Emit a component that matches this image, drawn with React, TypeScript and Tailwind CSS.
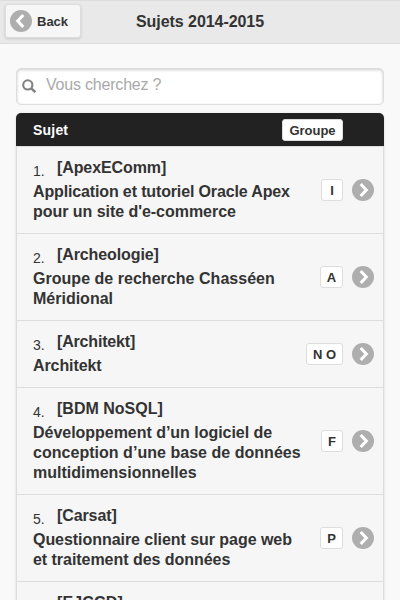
type Line = { text: string; tracking?: string };
type Row = { tag: Line; lines: Line[]; group: string; badge: string };

const rows: Row[] = [
  {
    tag: { text: "[ApexEComm]", tracking: "tracking-[-0.1px]" },
    lines: [
      { text: "Application et tutoriel Oracle Apex", tracking: "tracking-[-0.14px]" },
      { text: "pour un site d'e-commerce", tracking: "tracking-[-0.04px]" },
    ],
    group: "I",
    badge: "w-[22px]",
  },
  {
    tag: { text: "[Archeologie]", tracking: "tracking-[-0.1px]" },
    lines: [{ text: "Groupe de recherche Chasséen", tracking: "tracking-[0.03px]" }, { text: "Méridional" }],
    group: "A",
    badge: "w-[23px]",
  },
  {
    tag: { text: "[Architekt]", tracking: "tracking-[-0.18px]" },
    lines: [{ text: "Architekt", tracking: "tracking-[-0.1px]" }],
    group: "N O",
    badge: "w-[37px]",
  },
  {
    tag: { text: "[BDM NoSQL]" },
    lines: [
      { text: "Développement d’un logiciel de", tracking: "tracking-[-0.03px]" },
      { text: "conception d’une base de données", tracking: "tracking-[0.03px]" },
      { text: "multidimensionnelles" },
    ],
    group: "F",
    badge: "w-[22px]",
  },
  {
    tag: { text: "[Carsat]", tracking: "tracking-[-0.1px]" },
    lines: [
      { text: "Questionnaire client sur page web", tracking: "tracking-[-0.05px]" },
      { text: "et traitement des données", tracking: "tracking-[-0.04px]" },
    ],
    group: "P",
    badge: "w-[23px]",
  },
];

function Disc({ left = false }: { left?: boolean }) {
  return (
    <svg viewBox="0 0 22 22" className={left ? "size-[22px] shrink-0 -scale-x-100" : "size-[22px] shrink-0"}>
      <circle cx="11" cy="11" r="11" fill="#aeaeae" />
      <path d="M8.7 5 L14.3 11 L8.7 17" fill="none" stroke="#fff" strokeWidth="3.1" />
    </svg>
  );
}

export default function App() {
  return (
    <div className="h-[600px] w-[400px] overflow-hidden bg-[#f9f9f9] font-['Liberation_Sans',Arial,sans-serif] text-base text-[#333]">
      <header className="flex h-11 items-start border-y border-[#ddd] bg-[#e9e9e9] pl-[5px] pt-[3px]">
        <button className="flex h-[34px] w-[76px] items-center gap-[5px] rounded-[3px] border border-[#ddd] bg-[#f6f6f6] pl-1 text-[13px] font-bold shadow-[0_1px_3px_rgba(0,0,0,0.15)]">
          <Disc left />
          <span className="mt-px">Back</span>
        </button>
        <h1 className="ml-[55px] mt-2 whitespace-nowrap text-base font-bold leading-5 tracking-[-0.06px]">Sujets 2014-2015</h1>
      </header>

      <div className="mx-4 mt-6 flex h-[37px] items-center rounded-[5px] border border-[#ddd] bg-white pl-[5px] shadow-[inset_0_1px_3px_rgba(0,0,0,0.2)]">
        <svg viewBox="0 0 14 14" className="-mt-[2px] size-[14px]" fill="none" stroke="#808080">
          <circle cx="5.8" cy="5.9" r="4.6" strokeWidth="2.1" />
          <path d="M9.1 9.2 L13.2 13.2" strokeWidth="2.4" />
        </svg>
        <span className="-mt-[3px] ml-[10px] leading-5 tracking-[-0.2px] text-[#a9a9a9]">Vous cherchez ?</span>
      </div>

      <div className="mx-4 mt-2 overflow-hidden rounded-t-[5px] shadow-[0_1px_3px_rgba(0,0,0,0.15)]">
        <div className="flex h-[33px] items-center justify-between bg-[#222] pl-[17px] pr-[41px] text-[14px] font-bold text-white">
          <span className="mt-0.5 tracking-[0.2px]">Sujet</span>
          <span className="mt-px flex h-[22px] w-[61px] items-center justify-center rounded-[3px] border border-[#ddd] bg-white pt-px text-[13px] text-[#333]">Groupe</span>
        </div>
        <ol className="border-x border-[#ddd] bg-[#f6f6f6]">
          {rows.map((row, i) => (
            <li key={row.tag.text} className="flex items-center justify-between border-t border-[#ddd] pb-[11px] pl-4 pr-[9px] pt-[11px]">
              <div className="whitespace-nowrap font-bold leading-5">
                <div className="mb-1 flex h-5">
                  <span className="mt-[3px] w-6 text-[14px] font-normal leading-5">{i + 1}.</span>
                  <span className={row.tag.tracking}>{row.tag.text}</span>
                </div>
                {row.lines.map((line) => (
                  <div key={line.text} className={line.tracking}>{line.text}</div>
                ))}
              </div>
              <div className="flex items-center gap-[9px]">
                <span className={`flex h-[22px] items-center justify-center rounded-[3px] border border-[#ddd] bg-white pt-0.5 text-[13px] font-bold ${row.badge}`}>{row.group}</span>
                <Disc />
              </div>
            </li>
          ))}
          <li className="border-t border-[#ddd] pl-10 pt-[11px] font-bold leading-5 tracking-[0.15px]">[EJCCD]</li>
        </ol>
      </div>
    </div>
  );
}
